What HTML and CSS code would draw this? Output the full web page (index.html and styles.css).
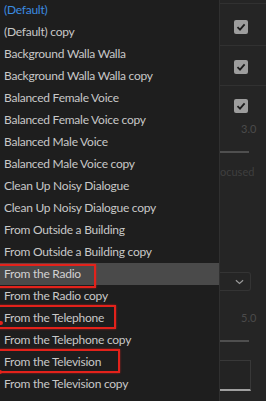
FILE: index.html
```html
<!DOCTYPE html>
<html lang="en">
<head>
    <meta charset="UTF-8">
    <meta name="viewport" content="width=device-width, initial-scale=1.0">
    <title>Presets</title>
    <link rel="stylesheet" href="styles.css">
</head>
<body>
    <div class="screen">
        <ul class="menu">
            <li class="item selected">(Default)</li>
            <li class="item">(Default) copy</li>
            <li class="item">Background Walla Walla</li>
            <li class="item">Background Walla Walla copy</li>
            <li class="item">Balanced Female Voice</li>
            <li class="item">Balanced Female Voice copy</li>
            <li class="item">Balanced Male Voice</li>
            <li class="item">Balanced Male Voice copy</li>
            <li class="item">Clean Up Noisy Dialogue</li>
            <li class="item">Clean Up Noisy Dialogue copy</li>
            <li class="item">From Outside a Building</li>
            <li class="item">From Outside a Building copy</li>
            <li class="item hover">From the Radio</li>
            <li class="item">From the Radio copy</li>
            <li class="item">From the Telephone</li>
            <li class="item">From the Telephone copy</li>
            <li class="item">From the Television</li>
            <li class="item">From the Television copy</li>
        </ul>

        <!-- пометки поверх списка -->
        <div class="mark mark-radio"></div>
        <div class="mark mark-phone"></div>
        <div class="mark mark-tv"></div>
        <div class="dot dot-1"></div>
        <div class="dot dot-2"></div>

        <div class="panel">
            <div class="row row-1"><span class="check"><svg viewBox="0 0 14 14"><path d="M3.5 7.2 L6 9.6 L10.6 4.4" /></svg></span></div>
            <div class="row row-2"><span class="check"><svg viewBox="0 0 14 14"><path d="M3.5 7.2 L6 9.6 L10.6 4.4" /></svg></span></div>
            <div class="row row-3"><span class="check"><svg viewBox="0 0 14 14"><path d="M3.5 7.2 L6 9.6 L10.6 4.4" /></svg></span></div>
            <div class="value value-1">3.0</div>
            <div class="slider slider-1"></div>
            <div class="label">ocused</div>
            <div class="select"><svg viewBox="0 0 10 6"><path d="M1 1 L5 4.5 L9 1" /></svg></div>
            <div class="value value-2">5.0</div>
            <div class="slider slider-2"></div>
            <div class="box"></div>
        </div>
    </div>
</body>
</html>
```

FILE: styles.css
```css
body {
    margin: 0;
    background: #1e1e1e;
    font-family: Lato, "Open Sans", Arial, sans-serif;
    overflow: hidden;
}
.screen {
    position: relative;
    display: flex;
    width: 266px;
    height: 401px;
    overflow: hidden;
}
.menu {
    list-style: none;
    margin: -1px 0 0 0;
    padding: 0;
    width: 219px;
    flex: none;
    background: #1e1e1e;
    border-right: 1px solid #303030;
}
.item {
    height: 22px;
    line-height: 22px;
    padding-left: 4px;
    font-size: 12px;
    letter-spacing: -0.25px;
    color: #c8c8c8;
    white-space: nowrap;
}
.item.selected {
    color: #3b8be0;
}
.item.hover {
    background: #4a4a4a;
    color: #d2d2d2;
}
.mark {
    position: absolute;
    left: -4px;
    border: 2px solid #e3221b;
    box-shadow: 0 0 2px rgba(227, 34, 27, 0.7);
}
.mark-radio {
    top: 264px;
    width: 96px;
    height: 20px;
}
.mark-phone {
    top: 305px;
    width: 116px;
    height: 20px;
}
.mark-tv {
    top: 349px;
    width: 120px;
    height: 20px;
}
.dot {
    position: absolute;
    left: -2px;
    width: 5px;
    height: 4px;
    border-radius: 2px;
    background: #e3221b;
}
.dot-1 { top: 321px; }
.dot-2 { top: 370px; left: -3px; }
.panel {
    flex: 1;
    background: #252525;
    padding-top: 3px;
}
.row {
    border-top: 1px solid #313131;
    padding-left: 14px;
}
.row-1 { height: 42px; padding-top: 16px; box-sizing: border-box; }
.row-2 { height: 40px; padding-top: 14px; box-sizing: border-box; }
.row-3 { padding-top: 13px; height: 30px; box-sizing: border-box; }
.check {
    display: block;
    width: 14px;
    height: 14px;
    border-radius: 2px;
    background: #9d9d9d;
}
.check svg {
    display: block;
    width: 14px;
    height: 14px;
    fill: none;
    stroke: #1c1c1c;
    stroke-width: 1.8;
}
.value {
    font-size: 11px;
    color: #4b4b4b;
    text-align: right;
    padding-right: 17px;
    line-height: 14px;
}
.value-1 { margin-top: 7px; }
.slider {
    width: 29px;
    height: 2px;
    background: #4f4f4f;
}
.slider-1 { margin-top: 15px; }
.label {
    font-size: 11px;
    color: #3f3f3f;
    text-align: right;
    padding-right: 19px;
    line-height: 14px;
    margin-top: 12px;
}
.select {
    margin-top: 93px;
    width: 31px;
    height: 19px;
    box-sizing: border-box;
    border: 1px solid #343434;
    border-left: none;
    border-radius: 0 3px 3px 0;
    display: flex;
    align-items: center;
    justify-content: flex-end;
    padding-right: 6px;
}
.select svg {
    width: 9px;
    height: 6px;
    fill: none;
    stroke: #9a9a9a;
    stroke-width: 1.3;
}
.value-2 { margin-top: 20px; }
.slider-2 { margin-top: 15px; }
.box {
    margin-top: 18px;
    width: 31px;
    height: 31px;
    box-sizing: border-box;
    border: 1px solid #383838;
    border-left: none;
    border-bottom: 2px solid #a0a0a0;
    background: #232323;
}
```
